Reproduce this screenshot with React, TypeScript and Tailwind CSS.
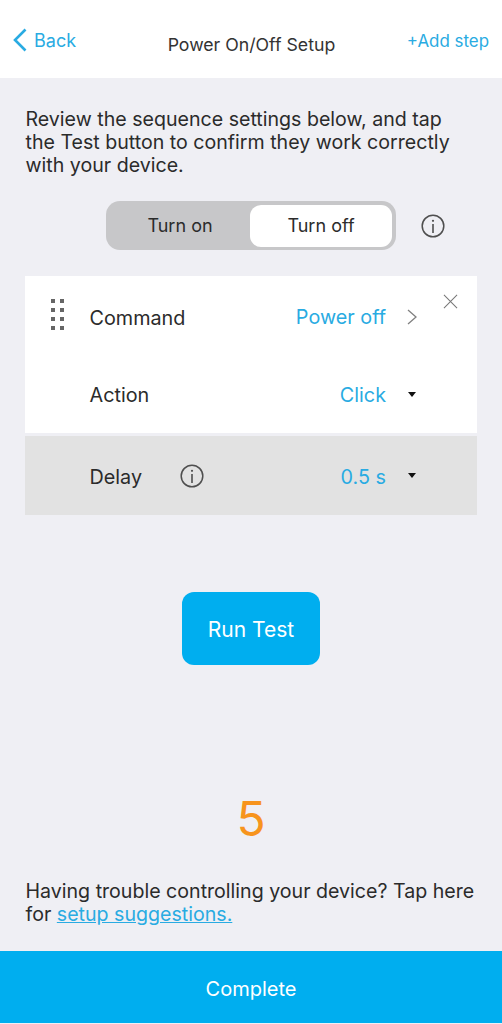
import React from "react";

const F = "font-['Inter','Liberation_Sans',sans-serif]";

function Info({ size = 24 }: { size?: number }) {
  return (
    <svg width={size} height={size} viewBox="0 0 24 24" fill="none" stroke="#4f4f4f" className="shrink-0">
      <circle cx="12" cy="12" r="10.8" strokeWidth="1.5" />
      <circle cx="12" cy="6.8" r="1.1" fill="#4f4f4f" stroke="none" />
      <path d="M12 10v9" strokeWidth="1.6" />
    </svg>
  );
}

function Caret() {
  return (
    <svg width="8" height="5" viewBox="0 0 8 5" className="shrink-0 block">
      <path d="M0 0h8L4 5z" fill="#111" />
    </svg>
  );
}

function Grip() {
  return (
    <div className="grid grid-cols-2 gap-x-[5px] gap-y-[5px] w-[13px]">
      {Array.from({ length: 8 }).map((_, i) => (
        <div key={i} className="w-[4px] h-[4px] bg-[#666666]" />
      ))}
    </div>
  );
}

export default function App() {
  return (
    <div className={`${F} w-[502px] h-[1024px] bg-[#efeff4] flex flex-col text-[#2b2b2b] overflow-hidden`}>
      <header className="h-[78px] bg-white flex items-start justify-between shrink-0 relative">
        <div className="flex items-center pl-[13px] pt-[28px] text-[#29abe2] text-[18px] leading-[24px]">
          <svg width="14" height="24" viewBox="0 0 14 24" fill="none" stroke="#29abe2" strokeWidth="2.6" className="mr-[7px]">
            <path d="M12.5 1.5 2 12l10.5 10.5" />
          </svg>
          <span className="relative top-[1px]">Back</span>
        </div>
        <div className="pt-[33px] text-[17.7px] leading-[24px] text-[#333333] ml-[20px]">Power On/Off Setup</div>
        <div className="pt-[29px] pr-[13px] text-[#29abe2] text-[16.9px] leading-[24px]">+Add step</div>
      </header>

      <p className="mt-[30px] ml-[25.5px] text-[19.6px] leading-[23px] whitespace-nowrap">
        Review the sequence settings below, and tap
        <br />
        the Test button to confirm they work correctly
        <br />
        with your device.
      </p>

      <div className="mt-[24px] ml-[106px] flex items-center">
        <div className="w-[290px] h-[49px] rounded-[14px] bg-[#c7c7c9] flex items-center pl-[4px] pr-[4px] text-[18px]">
          <div className="w-[140px] text-center">Turn on</div>
          <div className="w-[142px] h-[42px] bg-white rounded-[11px] flex items-center justify-center">Turn off</div>
        </div>
        <div className="ml-[25px]"><Info /></div>
      </div>

      <div className="mt-[26px] mx-[25px] w-[452px] text-[19.8px]">
        <div className="bg-white h-[157px] relative">
          <div className="absolute right-[19px] top-[18px]">
            <svg width="15" height="15" viewBox="0 0 16 16" stroke="#777" strokeWidth="1.1"><path d="M1 1l14 14M15 1 1 15" /></svg>
          </div>
          <div className="h-[82px] flex items-center pt-[1px]">
            <div className="w-[65px] pl-[26px] pb-[7px]"><Grip /></div>
            <span className="relative top-[1px] -left-[0.5px]">Command</span>
            <span className="ml-auto text-[#29abe2]">Power off</span>
            <div className="w-[91px] pl-[21px] pb-[2px]">
              <svg width="10" height="18" viewBox="0 0 10 18" fill="none" stroke="#808080" strokeWidth="1.3" className="block"><path d="M1 2l8 7-8 7" /></svg>
            </div>
          </div>
          <div className="h-[75px] flex items-center pt-[1px]">
            <span className="ml-[64.5px]">Action</span>
            <span className="ml-auto text-[#29abe2]">Click</span>
            <div className="w-[91px] pl-[22px] pb-[4px]"><Caret /></div>
          </div>
        </div>
        <div className="mt-[3px] bg-[#e2e2e2] h-[79px] flex items-center pt-[4px]">
          <span className="ml-[64.5px]">Delay</span>
          <div className="ml-[38px] pb-[3px]"><Info /></div>
          <span className="ml-auto text-[#29abe2]">0.5 s</span>
          <div className="w-[91px] pl-[22px] pb-[4px]"><Caret /></div>
        </div>
      </div>

      <button className="mt-[77px] self-center w-[138px] h-[73px] rounded-[12px] bg-[#00aeef] text-white text-[21px] pt-[3px]">Run Test</button>

      <div className="mt-[125px] text-center text-[48px] leading-[58px] text-[#f7941d]">5</div>

      <p className="mt-[32px] ml-[25.5px] text-[19.6px] leading-[23px] whitespace-nowrap">
        Having trouble controlling your device? Tap here
        <br />
        for <a className="text-[#29abe2] underline">setup suggestions.</a>
      </p>

      <button className="mt-auto mb-[1px] h-[72px] bg-[#00aeef] text-white text-[20px] shrink-0 pt-[3px]">Complete</button>
    </div>
  );
}
